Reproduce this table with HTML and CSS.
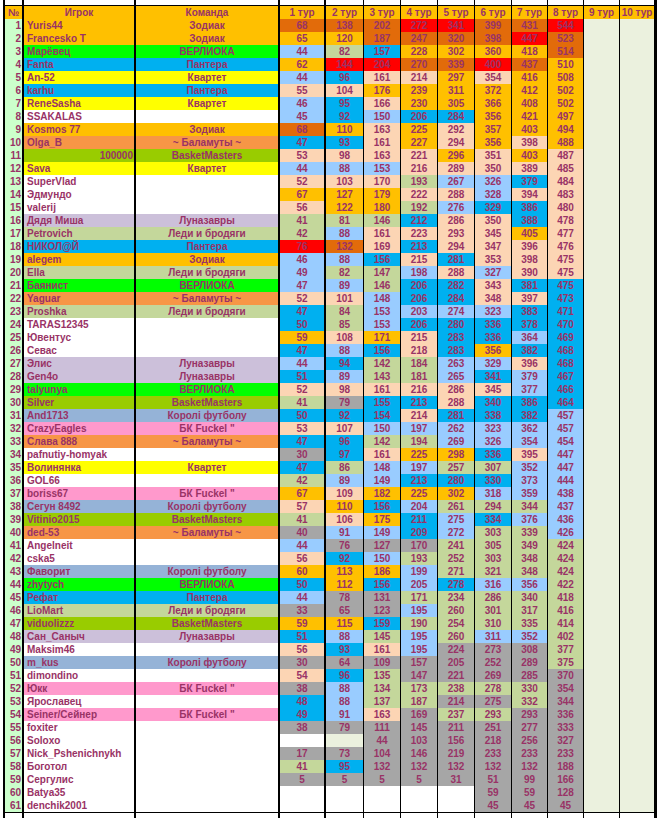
FILE: index.html
```html
<!DOCTYPE html>
<html lang="ru">
<head>
<meta charset="utf-8">
<title>Турнирная таблица</title>
<link rel="stylesheet" href="styles.css">
</head>
<body>
<div class="sheet">
<div class="row top"><div></div><div></div><div></div><div></div><div></div><div></div><div></div><div></div><div></div><div></div><div></div><div></div><div></div></div>
<div class="row hdr"><div class="o">№</div><div class="o">Игрок</div><div class="o">Команда</div><div class="o">1 тур</div><div class="o">2 тур</div><div class="o">3 тур</div><div class="o">4 тур</div><div class="o">5 тур</div><div class="o">6 тур</div><div class="o">7 тур</div><div class="o">8 тур</div><div class="o">9 тур</div><div class="o">10 тур</div></div>
<div class="row"><div class="n">1</div><div class="nm o">Yuris44</div><div class="o">Зодиак</div><div class="d">68</div><div class="d">138</div><div class="d">202</div><div class="r">272</div><div class="r">341</div><div class="d">399</div><div class="d">431</div><div class="r">544</div><div class="e"></div><div class="e"></div></div>
<div class="row"><div class="n">2</div><div class="nm o">Francesko T</div><div class="o">Зодиак</div><div class="o">65</div><div class="o">120</div><div class="d">187</div><div class="d">247</div><div class="d">320</div><div class="d">398</div><div class="r">447</div><div class="d">523</div><div class="e"></div><div class="e"></div></div>
<div class="row"><div class="n">3</div><div class="nm v">Марёвец</div><div class="v">ВЕРЛИОКА</div><div class="l">44</div><div class="g">82</div><div class="c">157</div><div class="o">228</div><div class="o">302</div><div class="o">360</div><div class="o">418</div><div class="d">514</div><div class="e"></div><div class="e"></div></div>
<div class="row"><div class="n">4</div><div class="nm c">Fanta</div><div class="c">Пантера</div><div class="o">62</div><div class="r">144</div><div class="r">204</div><div class="d">270</div><div class="d">339</div><div class="r">400</div><div class="d">437</div><div class="o">510</div><div class="e"></div><div class="e"></div></div>
<div class="row"><div class="n">5</div><div class="nm y">An-52</div><div class="y">Квартет</div><div class="l">44</div><div class="c">96</div><div class="p">161</div><div class="p">214</div><div class="o">297</div><div class="p">354</div><div class="o">416</div><div class="o">508</div><div class="e"></div><div class="e"></div></div>
<div class="row"><div class="n">6</div><div class="nm c">karhu</div><div class="c">Пантера</div><div class="p">55</div><div class="p">104</div><div class="o">176</div><div class="o">239</div><div class="o">311</div><div class="o">372</div><div class="o">412</div><div class="o">502</div><div class="e"></div><div class="e"></div></div>
<div class="row"><div class="n">7</div><div class="nm y">ReneSasha</div><div class="y">Квартет</div><div class="l">46</div><div class="c">95</div><div class="p">166</div><div class="o">230</div><div class="o">305</div><div class="o">366</div><div class="o">408</div><div class="o">502</div><div class="e"></div><div class="e"></div></div>
<div class="row"><div class="n">8</div><div class="nm w">SSAKALAS</div><div class="w"></div><div class="l">45</div><div class="c">92</div><div class="l">150</div><div class="c">206</div><div class="c">284</div><div class="o">356</div><div class="o">421</div><div class="o">497</div><div class="e"></div><div class="e"></div></div>
<div class="row"><div class="n">9</div><div class="nm o">Kosmos 77</div><div class="o">Зодиак</div><div class="d">68</div><div class="o">110</div><div class="p">163</div><div class="o">225</div><div class="p">292</div><div class="o">357</div><div class="o">403</div><div class="o">494</div><div class="e"></div><div class="e"></div></div>
<div class="row"><div class="n">10</div><div class="nm b">Olga_B</div><div class="b">~ Баламуты ~</div><div class="c">47</div><div class="c">93</div><div class="p">161</div><div class="o">227</div><div class="p">294</div><div class="o">356</div><div class="p">398</div><div class="o">488</div><div class="e"></div><div class="e"></div></div>
<div class="row"><div class="n">11</div><div class="nm k right">100000</div><div class="k">BasketMasters</div><div class="p">53</div><div class="p">98</div><div class="p">163</div><div class="p">221</div><div class="o">296</div><div class="p">351</div><div class="o">403</div><div class="p">487</div><div class="e"></div><div class="e"></div></div>
<div class="row"><div class="n">12</div><div class="nm y">Sava</div><div class="y">Квартет</div><div class="l">44</div><div class="l">88</div><div class="l">153</div><div class="p">216</div><div class="p">289</div><div class="p">350</div><div class="p">389</div><div class="p">485</div><div class="e"></div><div class="e"></div></div>
<div class="row"><div class="n">13</div><div class="nm w">SuperVlad</div><div class="w"></div><div class="p">52</div><div class="p">103</div><div class="p">170</div><div class="g">193</div><div class="l">267</div><div class="l">326</div><div class="c">379</div><div class="p">484</div><div class="e"></div><div class="e"></div></div>
<div class="row"><div class="n">14</div><div class="nm w">Эдмундо</div><div class="w"></div><div class="o">67</div><div class="o">127</div><div class="o">179</div><div class="p">222</div><div class="p">288</div><div class="l">328</div><div class="p">394</div><div class="p">483</div><div class="e"></div><div class="e"></div></div>
<div class="row"><div class="n">15</div><div class="nm w">valerij</div><div class="w"></div><div class="p">56</div><div class="o">122</div><div class="o">180</div><div class="g">192</div><div class="l">276</div><div class="c">329</div><div class="c">386</div><div class="p">480</div><div class="e"></div><div class="e"></div></div>
<div class="row"><div class="n">16</div><div class="nm u">Дядя Миша</div><div class="u">Луназавры</div><div class="g">41</div><div class="g">81</div><div class="g">146</div><div class="c">212</div><div class="p">286</div><div class="p">350</div><div class="c">388</div><div class="p">478</div><div class="e"></div><div class="e"></div></div>
<div class="row"><div class="n">17</div><div class="nm g">Petrovich</div><div class="g">Леди и бродяги</div><div class="g">42</div><div class="l">88</div><div class="p">161</div><div class="p">223</div><div class="p">293</div><div class="p">345</div><div class="o">405</div><div class="p">477</div><div class="e"></div><div class="e"></div></div>
<div class="row"><div class="n">18</div><div class="nm c">НИКОЛ@Й</div><div class="c">Пантера</div><div class="r">76</div><div class="d">132</div><div class="p">169</div><div class="c">213</div><div class="p">294</div><div class="p">347</div><div class="p">396</div><div class="p">476</div><div class="e"></div><div class="e"></div></div>
<div class="row"><div class="n">19</div><div class="nm o">alegem</div><div class="o">Зодиак</div><div class="l">46</div><div class="l">88</div><div class="c">156</div><div class="p">215</div><div class="c">281</div><div class="p">353</div><div class="p">398</div><div class="p">475</div><div class="e"></div><div class="e"></div></div>
<div class="row"><div class="n">20</div><div class="nm g">Ella</div><div class="g">Леди и бродяги</div><div class="l">49</div><div class="g">82</div><div class="g">147</div><div class="l">198</div><div class="p">288</div><div class="l">327</div><div class="p">390</div><div class="p">475</div><div class="e"></div><div class="e"></div></div>
<div class="row"><div class="n">21</div><div class="nm v">Баянист</div><div class="v">ВЕРЛИОКА</div><div class="l">47</div><div class="l">89</div><div class="g">146</div><div class="c">206</div><div class="c">282</div><div class="p">343</div><div class="c">381</div><div class="c">475</div><div class="e"></div><div class="e"></div></div>
<div class="row"><div class="n">22</div><div class="nm b">Yaguar</div><div class="b">~ Баламуты ~</div><div class="p">52</div><div class="p">101</div><div class="l">148</div><div class="c">206</div><div class="c">284</div><div class="p">348</div><div class="p">397</div><div class="c">473</div><div class="e"></div><div class="e"></div></div>
<div class="row"><div class="n">23</div><div class="nm g">Proshka</div><div class="g">Леди и бродяги</div><div class="c">47</div><div class="g">84</div><div class="l">153</div><div class="l">203</div><div class="l">274</div><div class="l">323</div><div class="c">383</div><div class="c">471</div><div class="e"></div><div class="e"></div></div>
<div class="row"><div class="n">24</div><div class="nm w">TARAS12345</div><div class="w"></div><div class="c">50</div><div class="g">85</div><div class="l">153</div><div class="c">206</div><div class="c">280</div><div class="c">336</div><div class="c">378</div><div class="c">470</div><div class="e"></div><div class="e"></div></div>
<div class="row"><div class="n">25</div><div class="nm w">Ювентус</div><div class="w"></div><div class="o">59</div><div class="p">108</div><div class="o">171</div><div class="p">215</div><div class="c">283</div><div class="c">336</div><div class="l">364</div><div class="c">469</div><div class="e"></div><div class="e"></div></div>
<div class="row"><div class="n">26</div><div class="nm w">Севас</div><div class="w"></div><div class="c">47</div><div class="l">88</div><div class="c">156</div><div class="p">218</div><div class="c">283</div><div class="o">356</div><div class="c">382</div><div class="c">468</div><div class="e"></div><div class="e"></div></div>
<div class="row"><div class="n">27</div><div class="nm u">Элис</div><div class="u">Луназавры</div><div class="l">44</div><div class="c">94</div><div class="g">142</div><div class="g">184</div><div class="l">263</div><div class="l">329</div><div class="p">396</div><div class="c">468</div><div class="e"></div><div class="e"></div></div>
<div class="row"><div class="n">28</div><div class="nm u">Gen4o</div><div class="u">Луназавры</div><div class="c">51</div><div class="l">89</div><div class="g">143</div><div class="g">181</div><div class="l">265</div><div class="c">341</div><div class="l">379</div><div class="c">467</div><div class="e"></div><div class="e"></div></div>
<div class="row"><div class="n">29</div><div class="nm v">talyunya</div><div class="v">ВЕРЛИОКА</div><div class="p">52</div><div class="p">98</div><div class="p">161</div><div class="p">216</div><div class="p">286</div><div class="p">345</div><div class="l">377</div><div class="c">466</div><div class="e"></div><div class="e"></div></div>
<div class="row"><div class="n">30</div><div class="nm k">Silver</div><div class="k">BasketMasters</div><div class="g">41</div><div class="a">79</div><div class="c">155</div><div class="c">213</div><div class="p">288</div><div class="c">340</div><div class="c">386</div><div class="c">464</div><div class="e"></div><div class="e"></div></div>
<div class="row"><div class="n">31</div><div class="nm s">And1713</div><div class="s">Королі футболу</div><div class="c">50</div><div class="c">92</div><div class="c">154</div><div class="p">214</div><div class="c">281</div><div class="c">338</div><div class="c">382</div><div class="l">457</div><div class="e"></div><div class="e"></div></div>
<div class="row"><div class="n">32</div><div class="nm m">CrazyEagles</div><div class="m">БК Fuckel "</div><div class="p">53</div><div class="p">107</div><div class="l">150</div><div class="l">197</div><div class="l">262</div><div class="l">323</div><div class="l">362</div><div class="l">457</div><div class="e"></div><div class="e"></div></div>
<div class="row"><div class="n">33</div><div class="nm b">Слава 888</div><div class="b">~ Баламуты ~</div><div class="c">47</div><div class="c">96</div><div class="g">142</div><div class="g">194</div><div class="l">269</div><div class="l">326</div><div class="l">354</div><div class="l">454</div><div class="e"></div><div class="e"></div></div>
<div class="row"><div class="n">34</div><div class="nm w">pafnutiy-homyak</div><div class="w"></div><div class="a">30</div><div class="c">97</div><div class="p">161</div><div class="o">225</div><div class="o">298</div><div class="c">336</div><div class="p">395</div><div class="l">447</div><div class="e"></div><div class="e"></div></div>
<div class="row"><div class="n">35</div><div class="nm y">Волинянка</div><div class="y">Квартет</div><div class="c">47</div><div class="g">86</div><div class="l">148</div><div class="l">197</div><div class="g">257</div><div class="g">307</div><div class="l">352</div><div class="l">447</div><div class="e"></div><div class="e"></div></div>
<div class="row"><div class="n">36</div><div class="nm w">GOL66</div><div class="w"></div><div class="g">42</div><div class="l">89</div><div class="l">149</div><div class="c">213</div><div class="c">280</div><div class="c">330</div><div class="l">373</div><div class="l">444</div><div class="e"></div><div class="e"></div></div>
<div class="row"><div class="n">37</div><div class="nm m">boriss67</div><div class="m">БК Fuckel "</div><div class="o">67</div><div class="p">109</div><div class="o">182</div><div class="o">225</div><div class="o">302</div><div class="l">318</div><div class="l">359</div><div class="l">438</div><div class="e"></div><div class="e"></div></div>
<div class="row"><div class="n">38</div><div class="nm s">Сегун 8492</div><div class="s">Королі футболу</div><div class="p">57</div><div class="o">110</div><div class="c">156</div><div class="l">204</div><div class="g">261</div><div class="g">294</div><div class="g">344</div><div class="l">437</div><div class="e"></div><div class="e"></div></div>
<div class="row"><div class="n">39</div><div class="nm k">Vitinio2015</div><div class="k">BasketMasters</div><div class="g">41</div><div class="p">106</div><div class="o">175</div><div class="c">211</div><div class="l">275</div><div class="c">334</div><div class="l">376</div><div class="l">436</div><div class="e"></div><div class="e"></div></div>
<div class="row"><div class="n">40</div><div class="nm b">ded-53</div><div class="b">~ Баламуты ~</div><div class="a">40</div><div class="l">91</div><div class="l">149</div><div class="c">209</div><div class="l">272</div><div class="g">303</div><div class="g">339</div><div class="l">426</div><div class="e"></div><div class="e"></div></div>
<div class="row"><div class="n">41</div><div class="nm w">Angelneit</div><div class="w"></div><div class="l">44</div><div class="a">76</div><div class="a">127</div><div class="a">170</div><div class="g">241</div><div class="g">305</div><div class="g">349</div><div class="g">424</div><div class="e"></div><div class="e"></div></div>
<div class="row"><div class="n">42</div><div class="nm w">cska5</div><div class="w"></div><div class="p">56</div><div class="c">92</div><div class="l">150</div><div class="g">193</div><div class="g">252</div><div class="g">303</div><div class="g">348</div><div class="g">424</div><div class="e"></div><div class="e"></div></div>
<div class="row"><div class="n">43</div><div class="nm s">Фаворит</div><div class="s">Королі футболу</div><div class="o">60</div><div class="o">113</div><div class="o">186</div><div class="l">199</div><div class="g">271</div><div class="g">321</div><div class="g">348</div><div class="g">424</div><div class="e"></div><div class="e"></div></div>
<div class="row"><div class="n">44</div><div class="nm v">zhytych</div><div class="v">ВЕРЛИОКА</div><div class="c">50</div><div class="o">112</div><div class="c">156</div><div class="l">205</div><div class="c">278</div><div class="l">316</div><div class="l">356</div><div class="g">422</div><div class="e"></div><div class="e"></div></div>
<div class="row"><div class="n">45</div><div class="nm c">Рефат</div><div class="c">Пантера</div><div class="l">44</div><div class="a">78</div><div class="a">131</div><div class="g">171</div><div class="g">234</div><div class="g">286</div><div class="g">340</div><div class="g">418</div><div class="e"></div><div class="e"></div></div>
<div class="row"><div class="n">46</div><div class="nm g">LioMart</div><div class="g">Леди и бродяги</div><div class="a">33</div><div class="a">65</div><div class="a">123</div><div class="l">195</div><div class="g">260</div><div class="g">301</div><div class="g">317</div><div class="g">416</div><div class="e"></div><div class="e"></div></div>
<div class="row"><div class="n">47</div><div class="nm k">viduolizzz</div><div class="k">BasketMasters</div><div class="o">59</div><div class="o">115</div><div class="c">159</div><div class="g">190</div><div class="g">254</div><div class="g">310</div><div class="g">335</div><div class="g">414</div><div class="e"></div><div class="e"></div></div>
<div class="row"><div class="n">48</div><div class="nm u">Сан_Саныч</div><div class="u">Луназавры</div><div class="c">51</div><div class="l">88</div><div class="g">145</div><div class="l">195</div><div class="g">260</div><div class="l">311</div><div class="l">352</div><div class="g">402</div><div class="e"></div><div class="e"></div></div>
<div class="row"><div class="n">49</div><div class="nm w">Maksim46</div><div class="w"></div><div class="p">56</div><div class="c">93</div><div class="p">161</div><div class="l">195</div><div class="a">224</div><div class="a">273</div><div class="a">308</div><div class="g">377</div><div class="e"></div><div class="e"></div></div>
<div class="row"><div class="n">50</div><div class="nm s">m_kus</div><div class="s">Королі футболу</div><div class="a">30</div><div class="a">64</div><div class="a">109</div><div class="a">157</div><div class="a">205</div><div class="a">252</div><div class="a">289</div><div class="g">375</div><div class="e"></div><div class="e"></div></div>
<div class="row"><div class="n">51</div><div class="nm w">dimondino</div><div class="w"></div><div class="p">54</div><div class="c">96</div><div class="g">135</div><div class="a">147</div><div class="a">221</div><div class="a">269</div><div class="a">285</div><div class="a">370</div><div class="e"></div><div class="e"></div></div>
<div class="row"><div class="n">52</div><div class="nm m">Юкк</div><div class="m">БК Fuckel "</div><div class="a">38</div><div class="l">88</div><div class="g">134</div><div class="g">173</div><div class="g">238</div><div class="g">278</div><div class="g">330</div><div class="a">354</div><div class="e"></div><div class="e"></div></div>
<div class="row"><div class="n">53</div><div class="nm w">Ярославец</div><div class="w"></div><div class="c">48</div><div class="l">88</div><div class="g">137</div><div class="g">187</div><div class="a">214</div><div class="a">275</div><div class="g">332</div><div class="a">344</div><div class="e"></div><div class="e"></div></div>
<div class="row"><div class="n">54</div><div class="nm m">Seiner/Сейнер</div><div class="m">БК Fuckel "</div><div class="c">49</div><div class="l">91</div><div class="p">163</div><div class="a">169</div><div class="g">237</div><div class="g">293</div><div class="a">293</div><div class="a">336</div><div class="e"></div><div class="e"></div></div>
<div class="row"><div class="n">55</div><div class="nm w">foxiter</div><div class="w"></div><div class="a">38</div><div class="a">79</div><div class="a">111</div><div class="a">145</div><div class="a">211</div><div class="a">251</div><div class="a">277</div><div class="a">333</div><div class="e"></div><div class="e"></div></div>
<div class="row"><div class="n">56</div><div class="nm w">Soloxo</div><div class="w"></div><div class="w"></div><div class="e"></div><div class="a">44</div><div class="a">103</div><div class="a">156</div><div class="a">218</div><div class="a">256</div><div class="a">327</div><div class="e"></div><div class="e"></div></div>
<div class="row"><div class="n">57</div><div class="nm w">Nick_Pshenichnykh</div><div class="w"></div><div class="a">17</div><div class="a">73</div><div class="a">104</div><div class="a">146</div><div class="a">219</div><div class="a">233</div><div class="a">233</div><div class="a">233</div><div class="e"></div><div class="e"></div></div>
<div class="row"><div class="n">58</div><div class="nm w">Боготол</div><div class="w"></div><div class="g">41</div><div class="c">95</div><div class="a">132</div><div class="a">132</div><div class="a">132</div><div class="a">132</div><div class="a">132</div><div class="a">188</div><div class="e"></div><div class="e"></div></div>
<div class="row"><div class="n">59</div><div class="nm w">Сергулис</div><div class="w"></div><div class="a">5</div><div class="a">5</div><div class="a">5</div><div class="a">5</div><div class="a">31</div><div class="a">51</div><div class="a">99</div><div class="a">166</div><div class="e"></div><div class="e"></div></div>
<div class="row"><div class="n">60</div><div class="nm w">Batya35</div><div class="w"></div><div class="w"></div><div class="w"></div><div class="w"></div><div class="w"></div><div class="w"></div><div class="a">59</div><div class="a">59</div><div class="a">128</div><div class="e"></div><div class="e"></div></div>
<div class="row last"><div class="n">61</div><div class="nm w">denchik2001</div><div class="w"></div><div class="w"></div><div class="w"></div><div class="w"></div><div class="w"></div><div class="w"></div><div class="a">45</div><div class="a">45</div><div class="a">45</div><div class="e"></div><div class="e"></div></div>
<div class="row bottom"><div></div><div></div><div></div><div></div><div></div><div></div><div></div><div></div><div></div><div></div><div></div><div></div><div></div></div>
</div>
</body>
</html>
```

FILE: styles.css
```css
html, body {
  margin: 0;
  padding: 0;
  background: #ffffff;
}

body {
  font-family: "Liberation Sans", Arial, sans-serif;
  font-weight: bold;
  font-size: 10px;
  line-height: 12px;
  color: #993366;
}

.sheet {
  margin-left: 3px;
  width: 652px;
  border-left: 2px solid #000;
}

.row {
  display: grid;
  grid-template-columns: 19px 112px 144px 46px 38px 37px 37px 37px 37px 36px 36px 36px 37px;
  height: 13px;
}

.row > div {
  box-sizing: border-box;
  border-right: 1px solid #000;
  border-bottom: 1px solid #000;
  padding-top: 1px;
  text-align: center;
  white-space: nowrap;
  background: #ffffff;
}

.row > div:nth-child(1),
.row > div:nth-child(2),
.row > div:nth-child(3),
.row > div:nth-child(4) {
  border-right-width: 2px;
}

.row > div:nth-child(13) {
  border-right-width: 3px;
}

.row.top {
  height: 6px;
}

.row.last {
  height: 14px;
}

.row.last > div {
  border-bottom-width: 2px;
}

.row.bottom {
  height: 5px;
}

.row.bottom > div {
  border-bottom: none;
}

.row > .n {
  background: #ccffcc;
  text-align: right;
  padding-right: 1px;
}

.row > .nm {
  text-align: left;
  padding-left: 3px;
}

.row > .nm.right {
  text-align: right;
  padding-left: 0;
  padding-right: 1px;
}

/* fill colours */
.row > .o { background: #ffc000; }
.row > .d { background: #e26b0a; }
.row > .r { background: #ff0000; }
.row > .l { background: #99ccff; }
.row > .c { background: #00b0f0; }
.row > .p { background: #fcd5b4; }
.row > .g { background: #c4d79b; }
.row > .a { background: #a6a6a6; }
.row > .w { background: #ffffff; }
.row > .e { background: #ebf1de; }
.row > .y { background: #ffff00; }
.row > .v { background: #00ff00; }
.row > .b { background: #f79646; }
.row > .k { background: #99cc00; }
.row > .u { background: #ccc0da; }
.row > .s { background: #95b3d7; }
.row > .m { background: #ff99cc; }
```
